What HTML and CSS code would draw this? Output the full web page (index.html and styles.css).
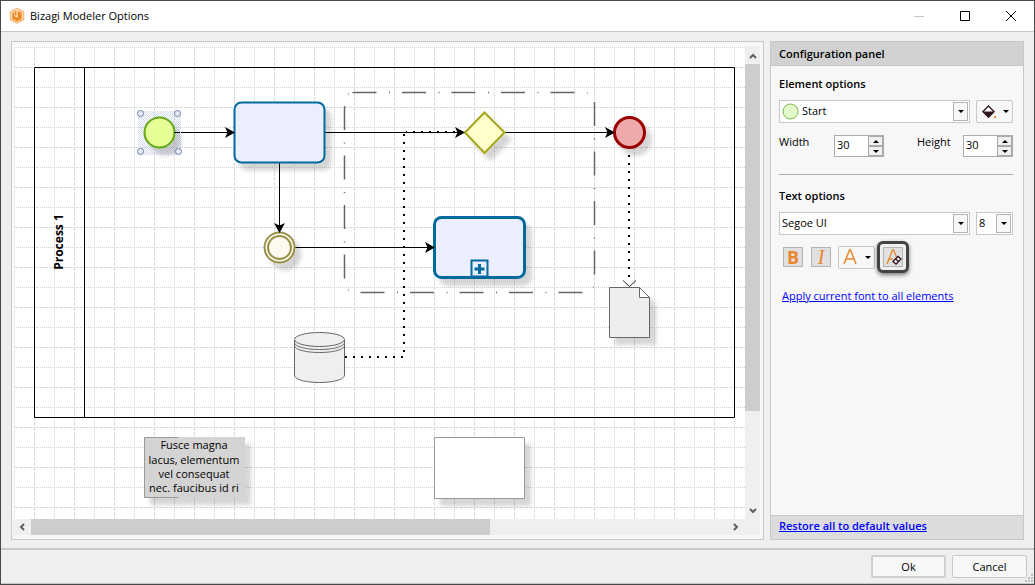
FILE: index.html
```html
<!DOCTYPE html>
<html lang="en">
<head>
<meta charset="utf-8">
<title>Bizagi Modeler Options</title>
<link rel="stylesheet" href="styles.css">
</head>
<body>
<div class="window">
  <header class="titlebar">
    <svg class="logo" width="16" height="18" viewBox="0 0 16 18" aria-hidden="true">
      <path d="M8 1.500 14.500 5v7.500L8 16 1.500 12.500V5z" fill="#fff3e4" stroke="#f5b878" stroke-width="1.500"/>
      <path d="M8.500 3.500 12.800 6v6L8 14.500 3.200 12V6L5 5v4l3.500 1.500z" fill="#f08a24"/>
      <path d="M5.500 4.500 7.500 3.500v5l-2 .2z" fill="#f08a24"/>
    </svg>
    <h1 class="window-title">Bizagi Modeler Options</h1>
    <div class="window-buttons">
      <button class="window-button" aria-label="Minimize" disabled><svg width="12" height="12"><path d="M1 6.500h10" stroke="#c4c4c4"/></svg></button>
      <button class="window-button" aria-label="Maximize"><svg width="12" height="12"><path d="M1.500 1.500h9v9h-9z" fill="none" stroke="#000"/></svg></button>
      <button class="window-button" aria-label="Close"><svg width="12" height="12"><path d="M1 1l10 10M11 1 1 11" stroke="#000"/></svg></button>
    </div>
  </header>

  <main class="content">
    <section class="canvas-frame" aria-label="Diagram preview">
      <svg class="diagram" role="img" aria-label="Process 1 diagram">
        <defs>
          <pattern id="grid" x="34" y="67" width="40" height="40" patternUnits="userSpaceOnUse">
            <path d="M.5 0v40M0 .5h40" stroke="#dadada" stroke-dasharray="4 1"/>
            <path d="M20.500 0v40M0 20.500h40" stroke="#d2d2d2" stroke-dasharray="1 1"/>
          </pattern>
          <pattern id="hatch" width="2" height="2" patternUnits="userSpaceOnUse">
            <path d="M0 0h1v1H0zM1 1h1v1H1z" fill="#d5dceb"/>
          </pattern>
          <filter id="shadow" x="-30%" y="-30%" width="180%" height="180%">
            <feDropShadow dx="6" dy="7" stdDeviation="2" flood-color="#000" flood-opacity=".16"/>
          </filter>
          <path id="arrow" d="M0 0-10-5.500-7.500 0-10 5.500z"/>
        </defs>
        <g transform="translate(-13 -46)">
          <rect x="13" y="46" width="2000" height="1500" fill="url(#grid)"/>
          <path d="M34.500 67.500h700v350h-700zM84.500 67.500v350" fill="none" stroke="#000"/>
          <text class="pool-name" transform="translate(63 242) rotate(-90)">Process 1</text>

          <path class="group-line" d="M352.500 92.500H579"/>
          <path class="group-line" d="M344.500 106v176M594.500 102v176M360.500 292.500H586"/>
          <path d="M348 94h1M587 93h1M348 290h1M593 287h1" stroke="#666"/>

          <path class="flow" d="M175 132.500h56M279.500 163v66M325 132.500h135M294 247.500h136M504 132.500h106"/>
          <path class="dotted" d="M463 132H406M404 134v220M345 357h59M629 155v124"/>

          <g filter="url(#shadow)">
            <rect x="234.500" y="102.500" width="90" height="60" rx="7" fill="#ebeeff" stroke="#00699d" stroke-width="2"/>
            <rect x="434.500" y="217.500" width="90" height="60" rx="7" fill="#ebeeff" stroke="#00699d" stroke-width="3"/>
            <path d="M484.500 112.500l20 20-20 20.500-19.500-20.500z" fill="#ffc" stroke="#a6a61d" stroke-width="2"/>
            <circle cx="629.500" cy="132.500" r="15" fill="#eeaaab" stroke="#900" stroke-width="3"/>
            <circle cx="279.500" cy="247.500" r="15" fill="#fffaf0" stroke="#97924a" stroke-width="2"/>
            <path d="M609.500 287.500h30l10 10v40h-40z" fill="#eee" stroke="#666"/>
            <path d="M434.500 437.500h90v61h-90z" fill="#fff" stroke="#999"/>
            <path d="M144 437h101v61H144z" fill="#d4d4d4"/>
          </g>
          <circle cx="279.500" cy="247.500" r="11.500" fill="#fffaf0" stroke="#97924a" stroke-width="2"/>
          <path d="M471.500 260.500h16v16h-16z" fill="none" stroke="#00699d" stroke-width="2"/>
          <path d="M479.500 264v10M474.500 269h10" stroke="#00699d" stroke-width="3"/>
          <path d="M639.500 287.500v10h10z" fill="#fff" stroke="#666"/>
          <path d="M178 437.500h-33.500v60H178" fill="none" stroke="#999"/>

          <path d="M138 111h43v44h-43z" fill="url(#hatch)"/>
          <circle cx="159.500" cy="132.500" r="15" fill="#e6ff97" stroke="#62a716" stroke-width="2" filter="url(#shadow)"/>
          <g fill="#e8ecf6" stroke="#6f7fad"><circle cx="140.500" cy="113.500" r="3"/><circle cx="177.500" cy="113.500" r="3"/><circle cx="140.500" cy="151.500" r="3"/><circle cx="178.500" cy="151.500" r="3"/></g>
          <path d="M174 132.500h6" stroke="#000"/>

          <g fill="#efefef" stroke="#666">
            <path d="M294.500 340v35c0 4.500 11 7.500 25 7.500s25-3 25-7.500v-35"/>
            <path d="M294.500 345.500c0 4 11 7 25 7s25-3 25-7M294.500 342.500c0 4 11 7 25 7s25-3 25-7" fill="none"/>
            <ellipse cx="319.500" cy="339.500" rx="25" ry="7"/>
          </g>

          <use href="#arrow" x="235" y="132.500"/>
          <use href="#arrow" x="465" y="132.500"/>
          <use href="#arrow" x="615" y="132.500"/>
          <use href="#arrow" x="435" y="247.500"/>
          <use href="#arrow" transform="translate(279.500 233) rotate(90)"/>
          <path d="M623 280.500l6.500 6 6.500-6" fill="none" stroke="#222"/>

          <g class="note-text">
            <text x="194" y="449">Fusce magna</text>
            <text x="194" y="464">lacus, elementum</text>
            <text x="194" y="478">vel consequat</text>
            <text x="194" y="492">nec. faucibus id ri</text>
          </g>
        </g>
      </svg>
      <div class="scrollbar vertical">
        <svg width="8" height="6"><path d="M1 5l3-3 3 3" class="chevron"/></svg>
        <div class="track"><div class="thumb"></div></div>
        <svg width="8" height="6"><path d="M1 1l3 3 3-3" class="chevron"/></svg>
      </div>
      <div class="scrollbar horizontal">
        <svg width="6" height="8"><path d="M5 1 2 4l3 3" class="chevron"/></svg>
        <div class="track"><div class="thumb"></div></div>
        <svg width="6" height="8"><path d="M1 1l3 3-3 3" class="chevron"/></svg>
      </div>
      <div class="scroll-corner"></div>
    </section>

    <aside class="panel">
      <h2 class="panel-title">Configuration panel</h2>
      <div class="panel-body">
        <h3 class="group-title">Element options</h3>
        <div class="row">
          <div class="combo combo-wide">
            <svg class="combo-icon" width="17" height="17"><circle cx="8.500" cy="8.500" r="7.500" fill="#e2fbc8" stroke="#7ab648"/></svg>
            <select class="select with-icon" aria-label="Element"><option>Start</option></select>
            <span class="combo-button"></span>
          </div>
          <button class="split-button" aria-label="Fill color">
            <svg width="16" height="16"><path d="M7.500 2 13 7.500 7.500 13 2 7.500z" fill="#fff" stroke="#30141f" stroke-width="1.300"/><path d="M1 7.500h13L7.500 14z" fill="#30141f"/><path d="M13 12h2v2h-2z" fill="#f08a24"/></svg>
            <span class="caret"></span>
          </button>
        </div>
        <div class="row size-row">
          <label for="width">Width</label>
          <div class="spinner"><input id="width" value="30"><div class="steps"><button aria-label="Increase width"><span class="caret up"></span></button><button aria-label="Decrease width"><span class="caret"></span></button></div></div>
          <label class="height-label" for="height">Height</label>
          <div class="spinner"><input id="height" value="30"><div class="steps"><button aria-label="Increase height"><span class="caret up"></span></button><button aria-label="Decrease height"><span class="caret"></span></button></div></div>
        </div>
        <hr class="divider">
        <h3 class="group-title">Text options</h3>
        <div class="row">
          <div class="combo combo-wide"><select class="select" aria-label="Font"><option>Segoe UI</option></select><span class="combo-button"></span></div>
          <div class="combo combo-small"><select class="select" aria-label="Font size"><option>8</option></select><span class="combo-button"></span></div>
        </div>
        <div class="format-row">
          <button class="tool bold">B</button>
          <button class="tool italic">I</button>
          <button class="split-button font-color" aria-label="Font color"><svg width="14" height="16"><path d="M1 15 6.500 1h1L13 15M3 10h8" fill="none" stroke="#e8862e" stroke-width="1.500"/></svg><span class="caret"></span></button>
          <button class="clear-format" aria-label="Clear formatting"><span class="tool"><svg width="18" height="18"><path d="M3 16 8.500 2h1l3 7M5 11h4" fill="none" stroke="#e8862e" stroke-width="1.300"/><path d="M9 13.500l5-5 3 2.500-5 5zM11.500 11l3 2.500" fill="#fff" stroke="#30141f" stroke-width="1.300"/></svg></span></button>
        </div>
        <a class="apply-link" href="#">Apply current font to all elements</a>
      </div>
      <div class="panel-footer"><a href="#">Restore all to default values</a></div>
    </aside>
  </main>

  <footer class="dialog-footer">
    <button class="dialog-button primary">Ok</button>
    <button class="dialog-button">Cancel</button>
    <svg class="grip" width="8" height="8" aria-hidden="true"><path d="M6 0h2v2H6zM3 3h2v2H3zM6 3h2v2H6zM0 6h2v2H0zM3 6h2v2H3zM6 6h2v2H6z" fill="#bfbfbf"/></svg>
  </footer>
</div>
</body>
</html>
```
FILE: styles.css
```css
* { box-sizing: border-box; }
body { margin: 0; font: 11px/16px "Open Sans", "Noto Sans", sans-serif; color: #000; }
button, input, select { font: inherit; color: inherit; margin: 0; padding: 0; border: 0; background: none; border-radius: 0; }
h1, h2, h3 { margin: 0; font-size: 11px; font-weight: 600; }
a { color: #00f; }

.window { display: flex; flex-direction: column; height: 100vh; min-height: 480px; background: #efefef; border: 1px solid #4a484a; }
.titlebar { display: flex; align-items: center; height: 31px; background: #fff; border-bottom: 1px solid #c8c8c8; padding-left: 8px; }
.window-title { margin-left: 5px; font-weight: 400; }
.window-buttons { display: flex; margin-left: auto; }
.window-button { display: flex; width: 46px; height: 30px; align-items: center; justify-content: center; }

.content { display: flex; flex: 1; min-height: 0; gap: 6px; padding: 9px 10px 8px; }
.canvas-frame { flex: 1; min-width: 0; display: grid; grid-template: 1fr 18px / 1fr 18px; padding: 4px 0 2px 1px; background: #f7f7f7; border: 1px solid #c8c8c8; }
.diagram { width: 100%; height: 100%; background: #fff; overflow: hidden; }
.pool-name { font-size: 12px; font-weight: 700; text-anchor: middle; }
.note-text { font-size: 11px; text-anchor: middle; }
.flow { fill: none; stroke: #000; }
.dotted { fill: none; stroke: #000; stroke-width: 2; stroke-dasharray: 2 6; }
.group-line { fill: none; stroke: #666; stroke-width: 1.5; stroke-dasharray: 24 12.5 1 12; }

.scrollbar { display: flex; align-items: center; background: #efefef; }
.scrollbar .track { flex: 1; }
.scrollbar .thumb { background: #cdcdcd; }
.scrollbar svg { flex: none; }
.chevron { fill: none; stroke: #606060; stroke-width: 2; }
.vertical { flex-direction: column; margin-right: 3px; padding: 7px 0 5px; gap: 5px; }
.vertical .track { width: 100%; }
.vertical .thumb { height: 79%; }
.horizontal { padding: 0 6px; gap: 6px; margin-bottom: 2px; }
.horizontal .track { height: 100%; }
.horizontal .thumb { width: 66%; height: 100%; }
.scroll-corner { background: #efefef; margin: 0 3px 2px 0; }

.panel { display: flex; flex-direction: column; width: 254px; background: #f7f7f7; border: 1px solid #c8c8c8; }
.panel-title { padding: 4px 8px 3px; background: #d2d2d2; border-bottom: 1px solid #c8c8c8; }
.panel-body { flex: 1; padding: 10px 10px 0 8px; }
.group-title { padding-bottom: 1px; }
.panel-footer { padding: 2px 8px 5px; background: #dcdcdc; border-top: 1px solid #c8c8c8; font-weight: 600; }
.row { display: flex; gap: 6px; margin-top: 7px; }
.combo { position: relative; height: 23px; border: 1px solid #c8c8c8; background: #fff; }
.combo-wide { flex: 1; }
.combo-small { width: 37px; }
.combo-icon { position: absolute; left: 2px; top: 2px; }
.select { width: 100%; height: 20px; padding-left: 2px; appearance: none; }
.with-icon { padding-left: 22px; }
.combo-button { position: absolute; right: 1px; top: 1px; width: 15px; height: 19px; border: 1px solid #b4b4b4; background: #f7f7f7; pointer-events: none; display: flex; align-items: center; justify-content: center; }
.caret, .combo-button::after { content: ""; border: 3px solid transparent; border-top-color: #000; border-bottom: 0; }
.caret.up { border-top: 0; border-bottom: 3px solid #000; }
.split-button { display: flex; align-items: center; justify-content: space-between; width: 37px; height: 23px; padding: 0 3px 0 4px; border: 1px solid #c8c8c8; border-radius: 2px; background: #f7f7f7; }
.size-row { gap: 0; margin-top: 12px; }
.size-row label { width: 55px; line-height: 14px; }
.size-row .height-label { width: 46px; margin-left: auto; }
.spinner { display: flex; justify-content: space-between; width: 50px; height: 22px; border: 1px solid #ababab; background: #fff; }
.spinner input { width: 30px; height: 17px; padding-left: 2px; }
.steps { display: flex; flex-direction: column; width: 15px; }
.steps button { display: flex; flex: 1; align-items: center; justify-content: center; border: 1px solid #ababab; background: #f0f0f0; }
.divider { margin: 17px 0 13px; border: 0; border-top: 1px solid #ababab; }
.format-row { display: flex; align-items: center; gap: 7px; margin: 6px 0 0 4px; }
.tool { display: flex; align-items: center; justify-content: center; width: 20px; height: 20px; border: 1px solid #b4b4b4; background: #e0e0e0; color: #e8862e; }
.bold { font-size: 18px; font-weight: 700; }
.italic { font: italic 20px/18px "Liberation Serif", serif; margin-left: 1px; }
.clear-format { padding: 3px; margin-left: -5px; border: 3px solid #434343; border-radius: 6px; background: #efefef; box-shadow: 0 2px 4px rgba(0, 0, 0, .5); }
.apply-link { display: block; width: max-content; margin: 15px 0 0 3px; }

.dialog-footer { position: relative; display: flex; justify-content: flex-end; gap: 6px; height: 36px; padding: 5px 7px; border-top: 2px solid #c8c8c8; border-bottom: 1px solid #c8c8c8; }
.dialog-button { width: 75px; height: 23px; border: 1px solid #c8c8c8; border-radius: 2px; background: #f7f7f7; }
.dialog-button.primary { border: 2px solid #d0d0d0; }
.grip { position: absolute; right: 1px; bottom: 1px; }
```
